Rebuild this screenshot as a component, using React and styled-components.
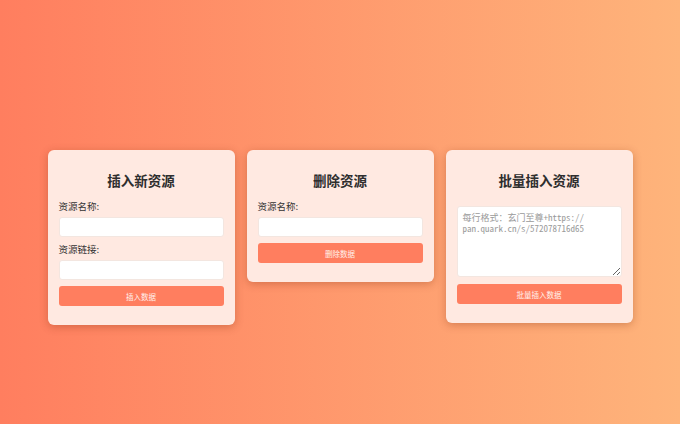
import React from 'react';
import styled, { createGlobalStyle } from 'styled-components';

const GlobalStyle = createGlobalStyle`
  * {
    box-sizing: border-box;
  }
  html, body {
    margin: 0;
    padding: 0;
  }
  body {
    font-family: "Noto Sans CJK SC", "Noto Sans", sans-serif;
    background: linear-gradient(to right, #ff7e5f, #feb47b);
    min-height: 100vh;
  }
`;

const Page = styled.div`
  min-height: 424px;
  display: flex;
  justify-content: center;
  align-items: flex-start;
  gap: 12px;
  padding-top: 150px;
`;

const Card = styled.div`
  width: 187px;
  background: #ffe9e1;
  border-radius: 6px;
  box-shadow: 0 2px 8px rgba(120, 40, 10, 0.3);
  padding: 11px 11px 19px;
`;

const Title = styled.h2`
  margin: 10px 0 ${(p) => p.$gap || 11}px;
  font-size: 13.5px;
  line-height: 18px;
  font-weight: 700;
  color: #2e2e2e;
  text-align: center;
`;

const Label = styled.label`
  display: block;
  font-size: 9.5px;
  line-height: 13px;
  color: #333;
  margin-bottom: 4px;
`;

const Input = styled.input`
  display: block;
  width: 100%;
  height: 20px;
  margin: 0 0 6px;
  padding: 0 5px;
  border: 1px solid #f3e6e0;
  border-radius: 3px;
  background: #fff;
  font-size: 9px;
  outline: none;
`;

const TextArea = styled.textarea`
  display: block;
  width: 100%;
  height: 71px;
  margin: 0 0 7px;
  padding: 5px;
  border: 1px solid #f3e6e0;
  border-radius: 3px;
  background: #fff;
  font-family: "Noto Sans Mono CJK SC", "Liberation Mono", monospace;
  font-size: 9px;
  line-height: 11px;
  outline: none;

  &::placeholder {
    color: #9a9a9a;
  }
`;

const Button = styled.button`
  display: block;
  width: 100%;
  height: 20px;
  border: none;
  border-radius: 3px;
  background: #ff7e5f;
  color: #fff1ec;
  font-family: "Noto Sans CJK SC", sans-serif;
  font-size: 7.5px;
  cursor: pointer;
`;

export default function App() {
  return (
    <>
      <GlobalStyle />
      <Page>
        <Card>
          <Title>插入新资源</Title>
          <Label>资源名称:</Label>
          <Input type="text" />
          <Label>资源链接:</Label>
          <Input type="text" />
          <Button>插入数据</Button>
        </Card>
        <Card>
          <Title>删除资源</Title>
          <Label>资源名称:</Label>
          <Input type="text" />
          <Button>删除数据</Button>
        </Card>
        <Card>
          <Title $gap={17}>批量插入资源</Title>
          <TextArea placeholder={'每行格式：玄门至尊+https://\u200bpan.quark.cn/s/572078716d65'} />
          <Button>批量插入数据</Button>
        </Card>
      </Page>
    </>
  );
}
